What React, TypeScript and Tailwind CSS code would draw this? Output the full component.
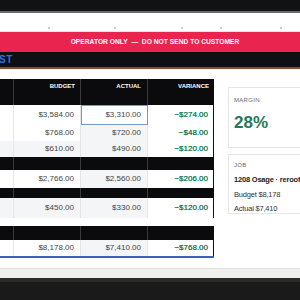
import React from "react";

type Row = { kind: "band" } | { kind: "row"; budget: string; actual: string; variance: string; shade?: boolean; selected?: boolean };

const rows: Row[] = [
  { kind: "band" },
  { kind: "row", budget: "$3,584.00", actual: "$3,310.00", variance: "−$274.00", selected: true },
  { kind: "row", budget: "$768.00", actual: "$720.00", variance: "−$48.00" },
  { kind: "row", budget: "$610.00", actual: "$490.00", variance: "−$120.00", shade: true },
  { kind: "band" },
  { kind: "row", budget: "$2,766.00", actual: "$2,560.00", variance: "−$206.00" },
  { kind: "band" },
  { kind: "row", budget: "$450.00", actual: "$330.00", variance: "−$120.00", shade: true },
];

const cols = "grid grid-cols-[14px_67px_67px_66px]";

const DataRow: React.FC<{ r: Extract<Row, { kind: "row" }>; h: string }> = ({ r, h }) => (
  <div className={`${cols} ${h} text-[8px] text-[#444]`}>
    <div className={`border-r border-[#e5e5e5] ${r.shade ? "bg-[#f4f5f6]" : "bg-white"}`} />
    <div className={`flex items-center justify-end pr-[6px] border-r border-[#e5e5e5] ${r.shade ? "bg-[#f4f5f6]" : "bg-white"}`}>{r.budget}</div>
    <div className={`flex items-center justify-end pr-[6px] border-r border-[#e5e5e5] ${r.selected ? "outline outline-1 outline-[#7b96c8] -outline-offset-1 bg-white" : "bg-[#f4f5f6]"}`}>{r.actual}</div>
    <div className="flex items-center justify-end pr-[5px] text-[#1a7d5a] bg-white border-r border-[#111] [text-shadow:0_0_0.2px_#1a7d5a]">{r.variance}</div>
  </div>
);

const Band: React.FC<{ h: string }> = ({ h }) => (
  <div className={`${cols} ${h} bg-[#0b0b0d]`}>
    <div className="border-r border-[#3a3a3a]" />
    <div className="border-r border-[#3a3a3a]" />
    <div className="border-r border-[#3a3a3a]" />
    <div />
  </div>
);

export default function App() {
  const heights = ["h-[12px]", "h-[20px]", "h-[16px]", "h-[16px]", "h-[13px]", "h-[18px]", "h-[10px]", "h-[20px]"];
  return (
    <div className="w-[300px] h-[300px] overflow-hidden bg-white flex flex-col" style={{ fontFamily: '"Liberation Sans", Arial, sans-serif' }}>
      <div className="h-[11px] bg-[#111214]" />
      <div className="h-[2px] bg-[#6b6b6b]" />
      <div className="h-[19px] bg-white border-b border-[#e8e8e8] relative">
        {[48, 114, 181, 220, 280].map(x => (
          <span key={x} className="absolute top-[14px] w-[2px] h-[2px] rounded-full bg-[#bdbdbd]" style={{ left: x }} />
        ))}
      </div>
      <div className="h-[20px] bg-[#e8244f] flex items-center justify-center pl-[10px] text-white text-[6.7px] font-bold whitespace-nowrap">
        OPERATOR ONLY&nbsp;&nbsp;—&nbsp;&nbsp;DO NOT SEND TO CUSTOMER
      </div>
      <div className="h-[15px] bg-[#0f1013] flex items-center">
        <span className="text-[10px] font-bold text-[#2f6fe0] tracking-[0.5px] -ml-[1px]">ST</span>
      </div>
      <div className="h-[2px] bg-[#8a4a33]" />
      <div className="flex flex-1 min-h-0">
        <div className="w-[214px] shrink-0 pt-[10px] flex flex-col">
          <div className={`${cols} h-[14px] bg-[#0b0b0d] text-white text-[6px] font-bold`}>
            <div className="border-r border-[#3a3a3a]" />
            <div className="flex items-center justify-end pr-[5px] border-r border-[#3a3a3a]">BUDGET</div>
            <div className="flex items-center justify-end pr-[6px] border-r border-[#3a3a3a]">ACTUAL</div>
            <div className="flex items-center justify-end pr-[5px]">VARIANCE</div>
          </div>
          {rows.map((r, i) =>
            r.kind === "band" ? <Band key={i} h={heights[i]} /> : <DataRow key={i} r={r} h={heights[i]} />
          )}
          <div className="h-[8px]" />
          <Band h="h-[14px]" />
          <div className="border-b-2 border-[#3b63b8]">
            <DataRow r={{ kind: "row", budget: "$8,178.00", actual: "$7,410.00", variance: "−$768.00" }} h="h-[16px]" />
          </div>
        </div>
        <div className="shrink-0 w-[110px] pl-[14px] pt-[18px] flex flex-col gap-[6px]">
          <div className="border border-[#e6e6e6] h-[61px] pl-[5px] pt-[8px]">
            <div className="text-[6px] text-[#666] tracking-[0.3px]">MARGIN</div>
            <div className="text-[17px] font-bold text-[#1f7a5a] mt-[9px] leading-none">28%</div>
          </div>
          <div className="border border-[#e6e6e6] h-[60px] pl-[5px] pt-[6px] text-[7.5px] leading-[10px] text-[#222] whitespace-nowrap tracking-[-0.2px]">
            <div className="text-[6px] leading-[9px] text-[#666] tracking-[0.3px]">JOB</div>
            <div className="font-bold mt-[5px]">1208 Osage · reroof</div>
            <div className="mt-[5px] text-[#333]">Budget $8,178</div>
            <div className="mt-[4px] text-[#333]">Actual $7,410</div>
          </div>
        </div>
      </div>
      <div className="h-[10px] bg-[#efefed] border-t border-[#e2e2e0]" />
      <div className="h-[4px] bg-[#2b2b2b]" />
      <div className="h-[18px] bg-[#1a1a1a]" />
    </div>
  );
}
